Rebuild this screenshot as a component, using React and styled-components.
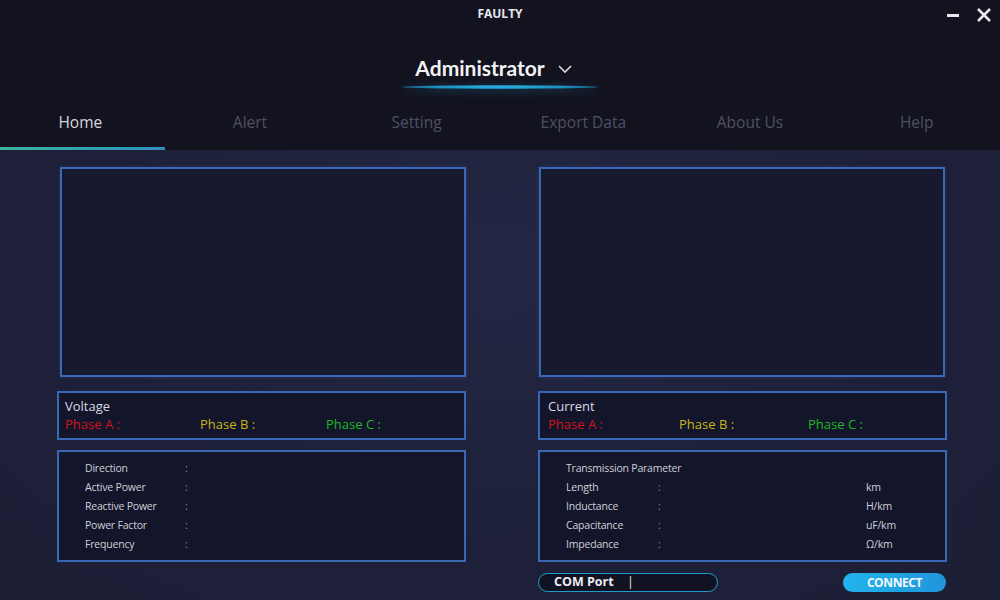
import styled, { createGlobalStyle } from "styled-components";

const GlobalStyle = createGlobalStyle`
  html, body {
    margin: 0;
    padding: 0;
    background: #1d2038;
  }
  * {
    box-sizing: border-box;
  }
`;

const tabs = ["Home", "Alert", "Setting", "Export Data", "About Us", "Help"];

const voltageRows = ["Direction", "Active Power", "Reactive Power", "Power Factor", "Frequency"];

const transmissionRows = [
  { label: "Length", unit: "km" },
  { label: "Inductance", unit: "H/km" },
  { label: "Capacitance", unit: "uF/km" },
  { label: "Impedance", unit: "\u03a9/km" },
];

const PhaseSet = ({ title, right }) => (
  <PhaseBox $right={right}>
    <PhaseTitle>{title}</PhaseTitle>
    <PhaseRow $cols={right ? "131px 129px 1fr" : "135px 126px 1fr"}>
      <Phase $color="#d3121c">Phase A :</Phase>
      <Phase $color="#c9b61a">Phase B :</Phase>
      <Phase $color="#1fb823">Phase C :</Phase>
    </PhaseRow>
  </PhaseBox>
);

const App = () => {
  return (
    <>
      <GlobalStyle />
      <Window>
        <Header>
          <TitleBar>
            <Title>FAULTY</Title>
            <WindowControls>
              <ControlButton aria-label="minimize">
                <svg width="14" height="14" viewBox="0 0 14 14">
                  <rect x="1" y="6" width="12" height="3" fill="#e8e8ee" />
                </svg>
              </ControlButton>
              <ControlButton aria-label="close">
                <svg width="16" height="16" viewBox="0 0 16 16">
                  <path d="M2 2 L14 14 M14 2 L2 14" stroke="#e8e8ee" strokeWidth="2.6" />
                </svg>
              </ControlButton>
            </WindowControls>
          </TitleBar>
          <UserRow>
            <UserSelect>
              Administrator
              <svg width="16" height="10" viewBox="0 0 16 10">
                <path d="M2 2 L8 8 L14 2" stroke="#d8d8e0" strokeWidth="1.6" fill="none" />
              </svg>
            </UserSelect>
            <Glow />
          </UserRow>
          <TabBar>
            {tabs.map((t, i) => (
              <Tab key={t} $active={i === 0}>
                {t}
              </Tab>
            ))}
          </TabBar>
        </Header>
        <Main>
          <Column>
            <ChartPanel />
            <PhaseSet title="Voltage" />
            <InfoBox>
              {voltageRows.map((r) => (
                <InfoRow key={r} $labelWidth="100px">
                  <span>{r}</span>
                  <span>:</span>
                </InfoRow>
              ))}
            </InfoBox>
          </Column>
          <Column>
            <ChartPanel $right />
            <PhaseSet title="Current" right />
            <InfoBox $right>
              <InfoHeading>Transmission Parameter</InfoHeading>
              {transmissionRows.map((r) => (
                <InfoRow key={r.label} $labelWidth="92px">
                  <span>{r.label}</span>
                  <span>:</span>
                  <Unit>{r.unit}</Unit>
                </InfoRow>
              ))}
            </InfoBox>
            <Footer>
              <PortField>
                COM Port <Caret>|</Caret>
              </PortField>
              <ConnectButton>CONNECT</ConnectButton>
            </Footer>
          </Column>
        </Main>
      </Window>
    </>
  );
};

// Styled Components
const Window = styled.div`
  width: 1000px;
  height: 600px;
  overflow: hidden;
  display: flex;
  flex-direction: column;
  font-family: "Open Sans", "Lato", sans-serif;
  background: radial-gradient(ellipse at 50% 45%, #232744 0%, #1d2038 60%, #1c1f36 100%);
`;

const Header = styled.div`
  background: #13131f;
  display: flex;
  flex-direction: column;
  height: 150px;
`;

const TitleBar = styled.div`
  position: relative;
  height: 28px;
  display: flex;
  justify-content: center;
  align-items: center;
`;

const Title = styled.div`
  color: #e6e6ee;
  font-weight: 700;
  font-size: 12px;
  margin-top: -2px;
`;

const WindowControls = styled.div`
  position: absolute;
  right: 8px;
  top: 6px;
  display: flex;
  gap: 15px;
  align-items: center;
`;

const ControlButton = styled.div`
  width: 16px;
  height: 18px;
  display: flex;
  align-items: center;
  justify-content: center;
`;

const UserRow = styled.div`
  display: flex;
  flex-direction: column;
  align-items: center;
  margin-top: 27px;
`;

const UserSelect = styled.div`
  display: flex;
  align-items: center;
  gap: 12px;
  color: #f2f2f6;
  font-family: "Lato", sans-serif;
  font-size: 21px;
  font-weight: 700;
  margin-left: -12px;
  svg {
    margin-top: 2px;
  }
`;

const Glow = styled.div`
  width: 196px;
  height: 4px;
  margin-top: 5px;
  border-radius: 50%;
  background: radial-gradient(ellipse at center, #29b8e6 0%, #1d8fbf 50%, rgba(20, 80, 120, 0) 100%);
  box-shadow: 0 2px 8px rgba(33, 160, 210, 0.35);
`;

const TabBar = styled.div`
  display: grid;
  grid-template-columns: repeat(6, 1fr);
  margin-top: 16px;
  flex: 1;
`;

const Tab = styled.div`
  display: flex;
  justify-content: center;
  padding-top: 6px;
  margin-left: ${(p) => (p.$active ? "-6px" : "0")};
  font-size: 15.5px;
  color: ${(p) => (p.$active ? "#d6d6de" : "#4f5064")};
  position: relative;
  &::after {
    content: "";
    display: ${(p) => (p.$active ? "block" : "none")};
    position: absolute;
    left: 6px;
    right: 2px;
    bottom: 0;
    height: 3px;
    background: linear-gradient(90deg, #3cb3a0 0%, #2e90c0 100%);
  }
`;

const Main = styled.div`
  display: grid;
  grid-template-columns: 409px 409px;
  column-gap: 72px;
  padding: 17px 0 0 57px;
`;

const Column = styled.div`
  display: flex;
  flex-direction: column;
`;

const panelBorder = "#3a68b4";

const ChartPanel = styled.div`
  height: 210px;
  margin: ${(p) => (p.$right ? "0 2px 0 1px" : "0 0 0 3px")};
  background: #171a2e;
  border: 2px solid ${panelBorder};
  box-shadow: 0 0 3px rgba(60, 110, 200, 0.35);
`;

const PhaseBox = styled.div`
  height: 49px;
  margin-top: 14px;
  background: #13152a;
  border: 2px solid ${panelBorder};
  padding: ${(p) => (p.$right ? "4px 0 0 8px" : "4px 0 0 6px")};
`;

const PhaseTitle = styled.div`
  color: #d8d8e0;
  font-size: 13px;
  line-height: 18px;
`;

const PhaseRow = styled.div`
  display: grid;
  grid-template-columns: ${(p) => p.$cols};
  font-size: 13px;
  line-height: 18px;
`;

const Phase = styled.div`
  color: ${(p) => p.$color};
`;

const InfoBox = styled.div`
  height: 112px;
  margin-top: 10px;
  background: #13152a;
  border: 2px solid ${panelBorder};
  padding: 7px 0 0 26px;
  display: flex;
  flex-direction: column;
`;

const InfoHeading = styled.div`
  color: #d0d0d8;
  font-size: 10.5px;
  line-height: 19px;
  letter-spacing: -0.2px;
`;

const InfoRow = styled.div`
  display: grid;
  grid-template-columns: ${(p) => p.$labelWidth} 208px 1fr;
  color: #d0d0d8;
  font-size: 10.5px;
  line-height: 19px;
  letter-spacing: -0.2px;
  span:nth-child(2) {
    color: #8a8a9a;
  }
`;

const Unit = styled.span`
  color: #d0d0d8;
`;

const Footer = styled.div`
  margin-top: 11px;
  display: flex;
  justify-content: space-between;
  align-items: center;
  padding-right: 1px;
`;

const PortField = styled.div`
  width: 180px;
  height: 19px;
  border: 1.5px solid #1f9cc9;
  border-radius: 10px;
  background: #111322;
  color: #ececf2;
  font-size: 12.5px;
  font-weight: 700;
  line-height: 16px;
  padding-left: 15px;
`;

const Caret = styled.span`
  font-weight: 400;
  margin-left: 10px;
`;

const ConnectButton = styled.div`
  width: 103px;
  height: 19px;
  border-radius: 10px;
  background: linear-gradient(90deg, #22b4ec 0%, #1f95dc 100%);
  color: #f4f8ff;
  font-size: 12px;
  font-weight: 700;
  display: flex;
  align-items: center;
  justify-content: center;
  letter-spacing: -0.4px;
`;

export default App;
